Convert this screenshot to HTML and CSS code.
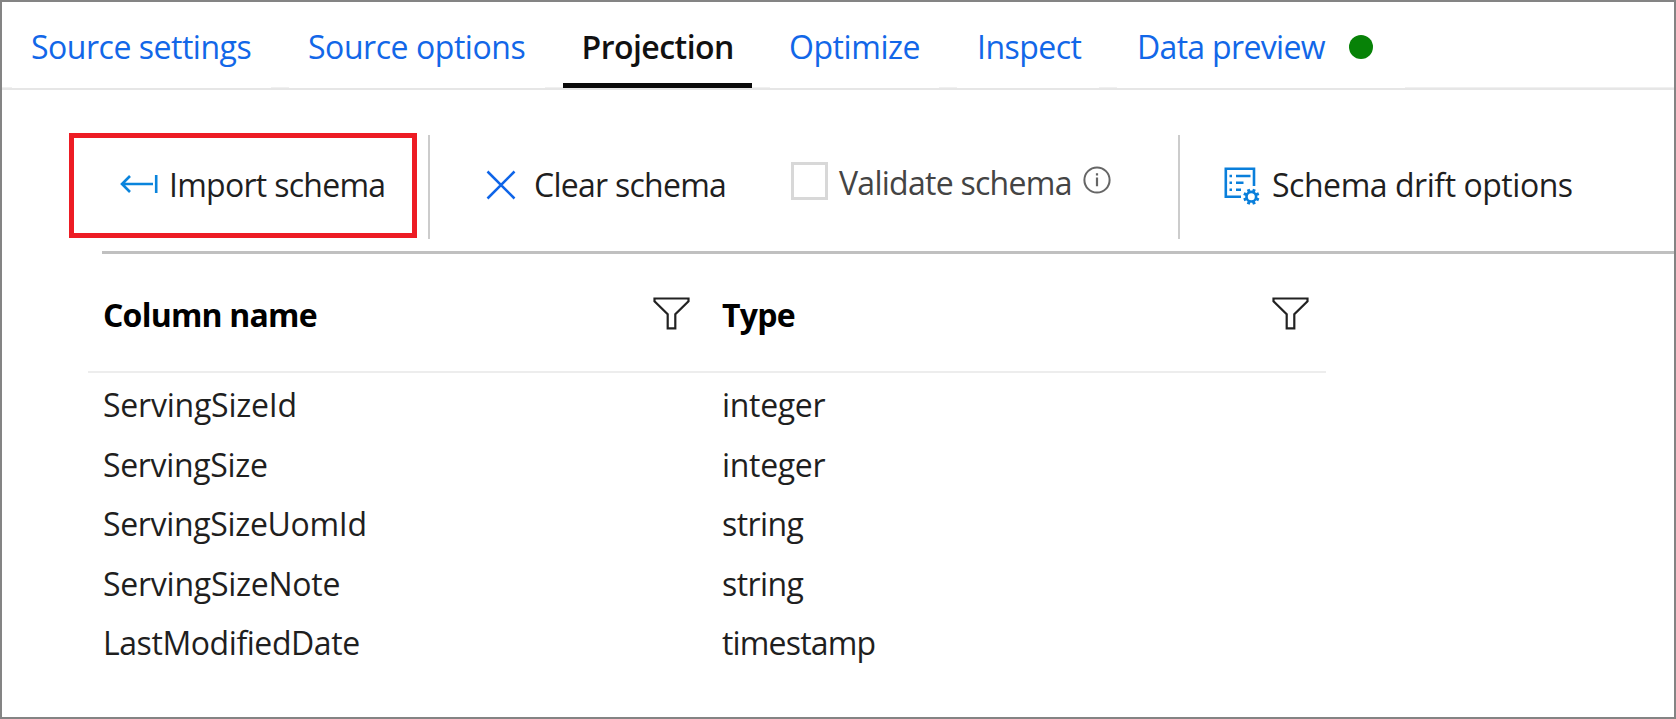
FILE: index.html
```html
<!DOCTYPE html>
<html lang="en">
<head>
<meta charset="utf-8">
<title>Source projection</title>
<link rel="stylesheet" href="styles.css">
</head>
<body>
<main class="panel">
  <nav class="tabs">
    <a class="tab tab-settings">Source settings</a>
    <a class="tab tab-options">Source options</a>
    <a class="tab tab-projection active">Projection</a>
    <a class="tab tab-optimize">Optimize</a>
    <a class="tab tab-inspect">Inspect</a>
    <a class="tab tab-preview">Data preview<span class="dot"></span></a>
  </nav>

  <div class="toolbar">
    <div class="tool import">
      <svg class="icon-import" width="38" height="20" viewBox="0 0 38 20" fill="none" stroke="#0a84dc" stroke-width="2.6"><path d="M2 10H33M10 2L2 10l8 8M36.2 1v18"/></svg>
      <span class="t-import">Import schema</span>
    </div>
    <div class="separator"></div>
    <div class="tool clear">
      <svg class="icon-clear" width="30" height="30" viewBox="0 0 30 30" fill="none" stroke="#0f65e8" stroke-width="2.5"><path d="M1.500 1.500l27 27M28.500 1.500l-27 27"/></svg>
      <span class="t-clear">Clear schema</span>
    </div>
    <div class="tool validate">
      <span class="checkbox"></span>
      <span class="t-validate">Validate schema</span>
      <svg class="icon-info" width="28" height="28" viewBox="0 0 28 28" fill="none" stroke="#666" stroke-width="2"><circle cx="14" cy="14" r="12.600"/><path d="M14 11.500v8.700M14 7.200v2.200" stroke-width="2.200"/></svg>
    </div>
    <div class="separator"></div>
    <div class="tool drift">
      <svg class="icon-drift" width="37" height="38" viewBox="0 0 37 38" fill="none" stroke="#0a7fdb">
        <path d="M17 29.800H1.800V1.800H30V19" stroke-width="2.600"/>
        <path d="M5.500 9h2.500M12 9h14.500M5.500 15.700h2.500M12 15.700h7.500M5.500 22.700h2.500M12 22.700h5" stroke-width="2.400"/>
        <circle cx="27.300" cy="29.700" r="4.800" stroke-width="2.600"/>
        <g stroke-width="3"><path d="M25.300 25l-1.100-2.800M29.300 25l1.100-2.800M25.300 34.400l-1.100 2.800M29.300 34.400l1.100 2.800M22.600 27.700l-2.800-1.100M22.600 31.700l-2.800 1.100M32 27.700l2.800-1.100M32 31.700l2.800 1.100"/></g>
      </svg>
      <span class="t-drift">Schema drift options</span>
    </div>
  </div>

  <section class="grid">
    <div class="head">
      <div class="cell"><span class="t-column">Column name</span><svg class="filter" width="37" height="33" viewBox="0 0 37 33" fill="none" stroke="#222" stroke-width="2.200"><path d="M1.500 1.500H35.500V4.200L22.300 17.200V31.300H14.700V17.200L1.500 4.200Z"/></svg></div>
      <div class="cell"><span class="t-type">Type</span><svg class="filter" width="37" height="33" viewBox="0 0 37 33" fill="none" stroke="#222" stroke-width="2.200"><path d="M1.500 1.500H35.500V4.200L22.300 17.200V31.300H14.700V17.200L1.500 4.200Z"/></svg></div>
    </div>
    <div class="row"><span class="n-id">ServingSizeId</span><span class="v-integer">integer</span></div>
    <div class="row"><span class="n-size">ServingSize</span><span class="v-integer">integer</span></div>
    <div class="row"><span class="n-uom">ServingSizeUomId</span><span class="v-string">string</span></div>
    <div class="row"><span class="n-note">ServingSizeNote</span><span class="v-string">string</span></div>
    <div class="row"><span class="n-date">LastModifiedDate</span><span class="v-timestamp">timestamp</span></div>
  </section>
</main>
</body>
</html>
```

FILE: styles.css
```css
* { box-sizing: border-box; }

body {
  margin: 0;
  background: #fff;
  color: #1f1f1f;
  font: 32px/44px "Open Sans", "Noto Sans", sans-serif;
  white-space: nowrap;
}

.panel {
  width: 1676px;
  height: 719px;
  border: 2px solid #848484;
  overflow: hidden;
}

/* tab strip */
.tabs {
  display: flex;
  gap: 18px;
  height: 88px;
  padding-left: 10px;
  border-bottom: 2px solid #e6e6e6;
  background: linear-gradient(#fff 85px, #f0f0f0 85px);
}
.tab {
  display: flex;
  height: 86px;
  padding: 23px 0 0 19px;
  background: #fff;
  color: #1267e8;
}
.tab-settings { width: 259px; letter-spacing: -0.48px; }
.tab-options { width: 256px; letter-spacing: -0.45px; }
.tab-projection { width: 189px; letter-spacing: -0.53px; }
.tab-optimize { width: 169px; letter-spacing: -0.44px; }
.tab-inspect { width: 142px; padding-left: 20px; letter-spacing: -0.53px; }
.tab-preview { width: 288px; padding-left: 20px; letter-spacing: -0.68px; }
.tab.active {
  height: 86px;
  padding-left: 18.5px;
  border-bottom: 5px solid #0a0a0a;
  color: #111;
  font-weight: 600;
}
.dot {
  width: 24px;
  height: 24px;
  margin: 10px 0 0 24.5px;
  border-radius: 50%;
  background: #078207;
}

/* toolbar */
.toolbar {
  display: flex;
  height: 121px;
  margin: 43px 0 0 100px;
  border-bottom: 3px solid #c0c0c0;
}
.tool { display: flex; height: 105px; padding-top: 30px; }
.import {
  width: 348px;
  margin-left: -33px;
  padding: 25px 0 0 46px;
  border: 5px solid #ed1c24;
}
.icon-import { margin: 11px 11px 0 0; }
.separator {
  width: 2px;
  height: 104px;
  margin-top: 2px;
  background: #ccc;
}
.import + .separator { margin-left: 11px; }
.clear { width: 361px; padding-left: 56px; }
.icon-clear { margin: 7px 18px 0 0; }
.validate { width: 387px; padding-top: 28px; color: #444; }
.checkbox {
  width: 37px;
  height: 38px;
  margin: 1px 11px 0 0;
  border: 3px solid #d8d8d8;
}
.icon-info { margin: 5px 0 0 11px; }
.drift { padding-left: 44px; }
.icon-drift { margin: 4px 11px 0 0; }

.t-import { letter-spacing: -0.72px; }
.t-clear { letter-spacing: -0.74px; }
.t-validate { letter-spacing: -0.73px; }
.t-drift { letter-spacing: -0.46px; }

/* schema grid */
.grid { width: 1238px; margin-left: 86px; }
.head {
  display: grid;
  grid-template-columns: 619px 619px;
  height: 119px;
  margin-bottom: 10px;
  padding: 39px 0 0;
  border-bottom: 2px solid #ededed;
  color: #000;
  font-weight: 700;
}
.cell {
  display: flex;
  justify-content: space-between;
  height: 44px;
  padding: 0 17px 0 15px;
}
.filter { margin-top: 4px; }
.row {
  display: grid;
  grid-template-columns: 619px 619px;
  height: 59.5px;
}
.row span { padding-left: 15px; }

.t-column { letter-spacing: -0.78px; }
.t-type { letter-spacing: -0.76px; }
.n-id { letter-spacing: -0.22px; }
.n-size, .n-uom { letter-spacing: -0.33px; }
.n-note { letter-spacing: -0.25px; }
.n-date { letter-spacing: -0.43px; }
.v-integer { letter-spacing: -0.32px; }
.v-string { letter-spacing: -0.59px; }
.v-timestamp { letter-spacing: -0.83px; }
```
